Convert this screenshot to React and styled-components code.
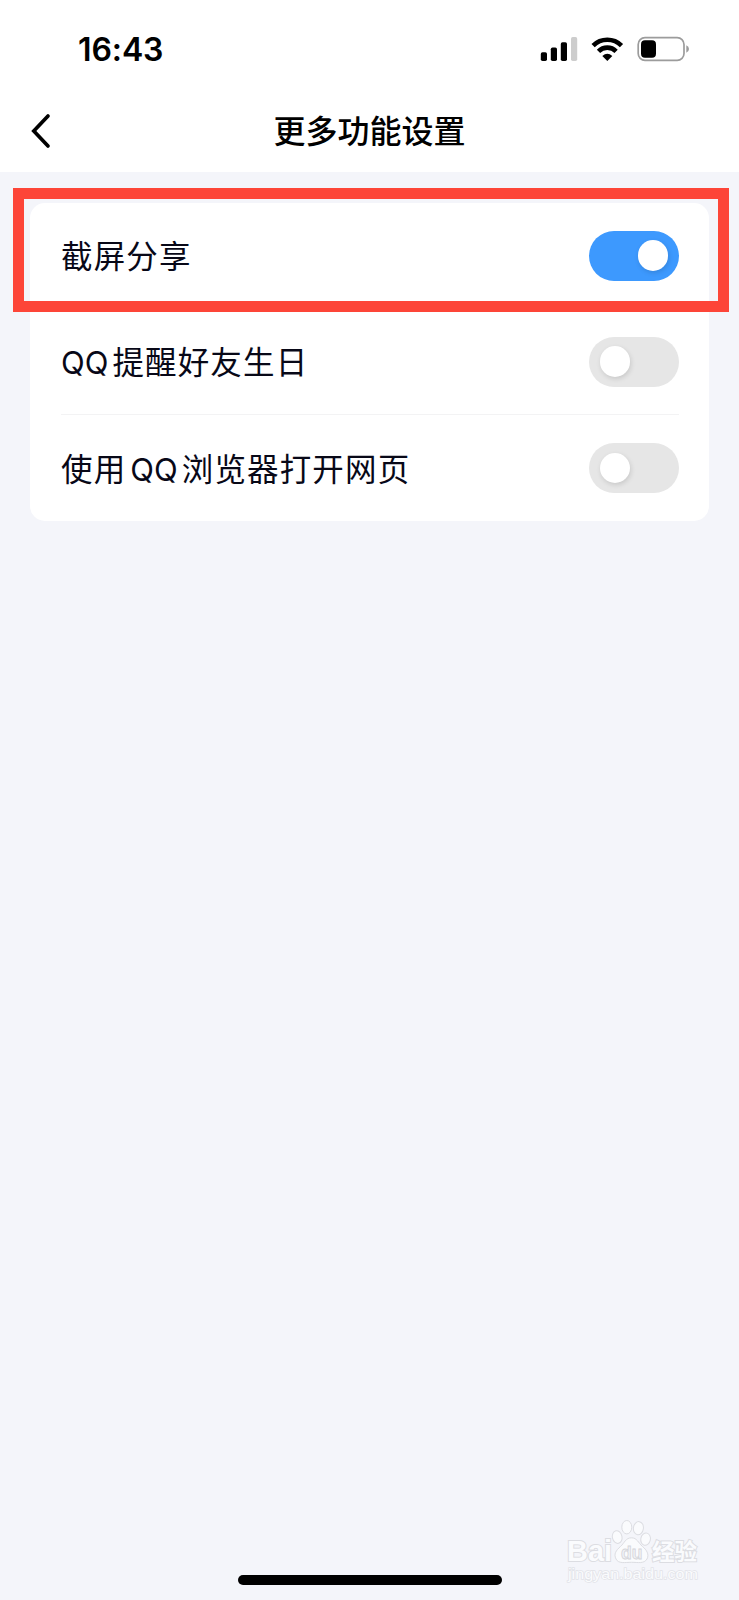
import React, { useState } from "react";
import styled, { createGlobalStyle } from "styled-components";

const GlobalStyle = createGlobalStyle`
  * { box-sizing: border-box; }
  body {
    margin: 0;
    background: #f4f5fa;
    font-family: Inter, "Noto Sans CJK SC", sans-serif;
    color: #000;
  }
`;

const Screen = styled.div`
  width: 739px;
  height: 1600px;
  display: flex;
  flex-direction: column;
  background: #f4f5fa;
  overflow: hidden;
`;

const StatusBar = styled.header`
  height: 98px;
  padding: 0 50px 0 78px;
  display: flex;
  align-items: center;
  justify-content: space-between;
  background: #fff;
`;

const Clock = styled.time`
  padding-top: 2px;
  font-size: 32px;
  font-weight: 600;
  line-height: 40px;
  letter-spacing: -0.1px;
`;

const StatusIcons = styled.svg`
  width: 149px;
  height: 26px;
  display: block;
`;

const NavBar = styled.nav`
  height: 74px;
  padding: 0 30px 8px;
  display: grid;
  grid-template-columns: 40px 1fr 40px;
  align-items: center;
  background: #fff;
`;

const BackButton = styled.button`
  width: 40px;
  height: 40px;
  padding: 0 0 1px;
  border: 0;
  background: none;
  display: flex;
  align-items: center;
`;

const Title = styled.h1`
  margin: 0;
  padding-top: 2px;
  font-size: 32px;
  font-weight: 500;
  line-height: 44px;
  text-align: center;
`;

const Content = styled.main`
  flex: 1;
  padding: 31px 30.5px 0 30px;
`;

const Card = styled.section`
  position: relative;
  height: 318px;
  padding: 0 30px 0 31px;
  border-radius: 15px;
  background: #fff;
`;

const Highlight = styled.div`
  position: absolute;
  left: -17.5px;
  right: -20.5px;
  top: -15.5px;
  height: 124.5px;
  border: 11.5px solid #fd4538;
  pointer-events: none;
`;

const Row = styled.div`
  height: 106px;
  display: flex;
  align-items: center;
  justify-content: space-between;
  border-bottom: ${(p) => (p.$last ? "0" : "1px solid #f3f3f4")};
`;

const Label = styled.span`
  display: flex;
  align-items: baseline;
  padding-top: 3px;
  font-size: 31.5px;
  line-height: 44px;
  letter-spacing: 1.15px;
  color: #080817;
  white-space: nowrap;
`;

const Latin = styled.span`
  margin: 0 4px 0 ${(p) => (p.$inner ? "4px" : "0")};
  font-size: 31px;
  letter-spacing: 0;
`;

const Switch = styled.button`
  width: 90px;
  height: 50px;
  padding: 0 10.5px 0 11px;
  border: 0;
  border-radius: 25px;
  display: flex;
  align-items: center;
  justify-content: ${(p) => (p.$on ? "flex-end" : "flex-start")};
  background: ${(p) => (p.$on ? "#3d99fe" : "#e6e6e6")};
`;

const Knob = styled.span`
  width: 30.5px;
  height: 30.5px;
  border-radius: 50%;
  background: #fff;
  box-shadow: 1px 2px 5px rgba(0, 0, 0, 0.13);
`;

const Footer = styled.footer`
  position: relative;
  height: 85px;
  display: flex;
  align-items: flex-end;
  justify-content: center;
  padding-bottom: 15px;
`;

const HomeIndicator = styled.div`
  width: 264px;
  height: 10px;
  border-radius: 5px;
  background: #000;
`;

const Watermark = styled.svg`
  position: absolute;
  right: 32px;
  top: 5px;
  width: 145px;
  height: 72px;
`;

const ROWS = [
  { id: "share", parts: ["截屏分享"], on: true },
  { id: "birthday", parts: ["QQ", "提醒好友生日"], on: false },
  { id: "browser", parts: ["使用", "QQ", "浏览器打开网页"], on: false },
];

function SettingRow({ parts, initial, last }) {
  const [on, setOn] = useState(initial);
  return (
    <Row $last={last}>
      <Label>
        {parts.map((part, i) =>
          part === "QQ" ? (
            <Latin key={i} $inner={i > 0}>{part}</Latin>
          ) : (
            <span key={i}>{part}</span>
          )
        )}
      </Label>
      <Switch $on={on} role="switch" aria-checked={on} onClick={() => setOn(!on)}>
        <Knob />
      </Switch>
    </Row>
  );
}

function PhoneStatus() {
  return (
    <StatusIcons viewBox="0 0 149 26">
      <rect x="0.8" y="16.3" width="6.2" height="8.7" rx="1.7" />
      <rect x="10.8" y="11.5" width="6.2" height="13.5" rx="1.7" />
      <rect x="20.8" y="6.2" width="6.2" height="18.8" rx="1.7" />
      <rect x="31" y="1" width="6.2" height="24" rx="1.7" fill="#cdcdcd" />
      <g fill="none" stroke="#000" strokeWidth="4.6">
        <path d="M53.1 9.6 A20.2 20.2 0 0 1 81.5 9.6" />
        <path d="M58.5 15.3 A12.4 12.4 0 0 1 76.1 15.3" />
      </g>
      <path d="M67.3 25 L62.3 19.9 Q67.3 15.7 72.3 19.9 Z" />
      <rect x="98.2" y="1.6" width="45.8" height="22.8" rx="6.8" fill="none" stroke="#9c9c9c" strokeWidth="1.7" />
      <rect x="101" y="4.3" width="15" height="17.4" rx="4" />
      <path d="M146.3 9.3 Q149 10.3 149 13 Q149 15.7 146.3 16.7 Z" fill="#9c9c9c" />
    </StatusIcons>
  );
}

function BaiduMark() {
  return (
    <Watermark viewBox="0 0 145 72" fill="#fafbfd" stroke="#dcdde2" strokeWidth="1">
      <g style={{ paintOrder: "stroke" }} strokeWidth="2">
        <text x="5" y="41" fontFamily="Liberation Sans, sans-serif" fontWeight="700" fontSize="29" textLength="45" lengthAdjust="spacingAndGlyphs">Bai</text>
        <text x="90" y="40" fontFamily="Noto Sans CJK SC, sans-serif" fontWeight="700" fontSize="22.5" textLength="45">经验</text>
        <text x="6" y="59" fontFamily="Liberation Sans, sans-serif" fontSize="15.5" textLength="130" lengthAdjust="spacingAndGlyphs" strokeWidth="1.4" stroke="#e2e3e8">jingyan.baidu.com</text>
      </g>
      <ellipse cx="55.2" cy="17.1" rx="4.8" ry="6.4" transform="rotate(-12 55.2 17.1)" />
      <ellipse cx="64.8" cy="7.2" rx="5" ry="6.7" />
      <ellipse cx="76.4" cy="8.2" rx="5" ry="6.6" transform="rotate(8 76.4 8.2)" />
      <ellipse cx="83.6" cy="19.2" rx="4.8" ry="6.2" transform="rotate(12 83.6 19.2)" />
      <path d="M69.5 17.8 C63.5 17.8 62.5 23 58.5 26.5 C54 30.4 51.5 34 54 39 C56.5 44 63 42.3 69.5 42.3 C76 42.3 82 44 85 39 C87.5 34.3 84.5 29.8 80.5 26.5 C76 22.5 75 17.8 69.5 17.8 Z" />
      <text x="59" y="38.5" fontFamily="Liberation Sans, sans-serif" fontWeight="700" fontSize="17.5" fill="#f1f2f6" stroke="#d4d5da" strokeWidth="0.8">du</text>
    </Watermark>
  );
}

export default function App() {
  return (
    <>
      <GlobalStyle />
      <Screen>
        <StatusBar>
          <Clock>16:43</Clock>
          <PhoneStatus />
        </StatusBar>
        <NavBar>
          <BackButton aria-label="返回">
            <svg width="22" height="36" viewBox="0 0 22 36" fill="none" stroke="#000" strokeWidth="3.7" strokeLinecap="round" strokeLinejoin="miter">
              <path d="M18 3 L3.8 18 L18 33" />
            </svg>
          </BackButton>
          <Title>更多功能设置</Title>
        </NavBar>
        <Content>
          <Card>
            {ROWS.map((row, i) => (
              <SettingRow key={row.id} parts={row.parts} initial={row.on} last={i === ROWS.length - 1} />
            ))}
            <Highlight />
          </Card>
        </Content>
        <Footer>
          <HomeIndicator />
          <BaiduMark />
        </Footer>
      </Screen>
    </>
  );
}
